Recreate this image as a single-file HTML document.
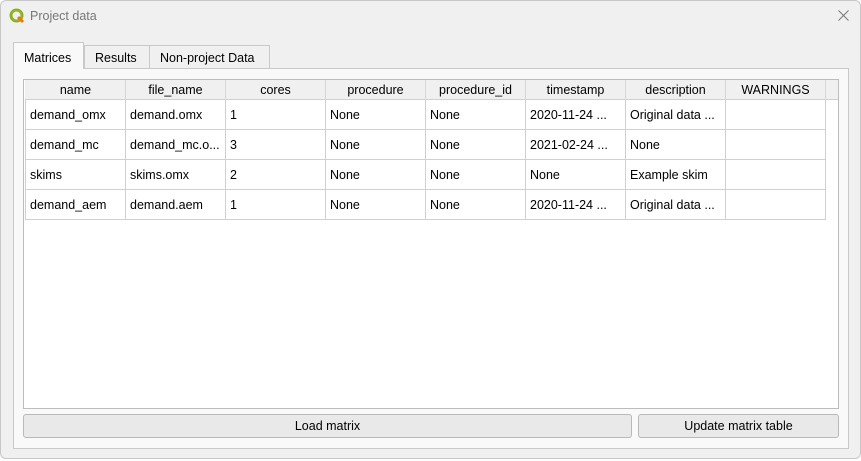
<!DOCTYPE html>
<html><head><meta charset="utf-8"><style>
*{margin:0;padding:0;box-sizing:border-box}
body{width:861px;height:461px;background:#fff;font-family:"Liberation Sans",sans-serif;font-size:12px;color:#000;position:relative;overflow:hidden}
.win{position:absolute;left:0;top:0;width:861px;height:459px;background:#f0f0f0;box-shadow:inset 0 0 0 1px #c8c8c8;border-radius:6px}
.title{position:absolute;left:30px;top:9px;color:#777;font-size:12.5px}
.close{position:absolute;left:836px;top:6px;color:#888;font-size:14px;font-weight:100}
.tab{position:absolute;top:45px;height:24px;border:1px solid #c9c9c9;border-bottom:none;background:#f0f0f0;padding:5px 10px 0;font-size:12.5px}
.tab.a{top:42px;height:27px;background:#f9f9f9;z-index:2;padding-top:8px}
.pane{position:absolute;left:13px;top:68px;width:836px;height:381px;border:1px solid #c9c9c9;background:#f9f9f9}
.tbl{position:absolute;left:23px;top:79px;width:816px;height:330px;border:1px solid #bcbcbc;background:#fff}
.hdr{position:absolute;left:1px;top:0;width:813px;height:20px;background:#f0f0f0;border-bottom:1px solid #d0d0d0}
.hc{position:absolute;top:0;height:20px;text-align:center;line-height:20px;border-right:1px solid #d8d8d8;font-size:12.5px}
.c{position:absolute;height:30px;line-height:30px;padding-left:4px;border-right:1px solid #d0d0d0;border-bottom:1px solid #d0d0d0;font-size:12.5px;white-space:nowrap;overflow:hidden}
.btn{position:absolute;top:414px;height:24px;border:1px solid #b9b9b9;border-radius:3px;background:#e9e9e9;text-align:center;line-height:22px;font-size:12.5px}
</style></head><body>
<div class="win">
<svg style="position:absolute;left:9px;top:8px" width="16" height="16" viewBox="0 0 16 16"><circle cx="7.5" cy="7.5" r="5.5" fill="none" stroke="#93b023" stroke-width="3"/><path d="M9 9l5 5" stroke="#ee7913" stroke-width="3"/></svg>
<div class="title">Project data</div>
<svg style="position:absolute;left:838px;top:10px" width="11" height="11" viewBox="0 0 11 11"><path d="M0.5 0.5L10.5 10.5M10.5 0.5L0.5 10.5" stroke="#777" stroke-width="1"/></svg>
<div class="tab a" style="left:13px;width:71px">Matrices</div>
<div class="tab" style="left:84px;width:66px">Results</div>
<div class="tab" style="left:149px;width:121px">Non-project Data</div>
<div class="pane"></div>
<div class="tbl">
<div class="hdr"></div>
<div id="g"></div>
</div>
<div class="btn" style="left:23px;width:609px">Load matrix</div>
<div class="btn" style="left:638px;width:201px">Update matrix table</div>
</div>
<script>
var h=["name","file_name","cores","procedure","procedure_id","timestamp","description","WARNINGS"];
var r=[["demand_omx","demand.omx","1","None","None","2020-11-24 ...","Original data ...",""],
["demand_mc","demand_mc.o...","3","None","None","2021-02-24 ...","None",""],
["skims","skims.omx","2","None","None","None","Example skim",""],
["demand_aem","demand.aem","1","None","None","2020-11-24 ...","Original data ...",""]];
var s="";
for(var i=0;i<8;i++){s+='<div class="hc" style="left:'+(2+i*100)+'px;width:100px">'+h[i]+'</div>';}
for(var j=0;j<4;j++)for(var i=0;i<8;i++){s+='<div class="c" style="left:'+(2+i*100)+'px;top:'+(20+j*30)+'px;width:100px">'+r[j][i]+'</div>';}
s+='<div style="position:absolute;left:1px;top:20px;width:1px;height:120px;background:#d0d0d0"></div>';
document.getElementById("g").innerHTML=s;
</script>
</body></html>
